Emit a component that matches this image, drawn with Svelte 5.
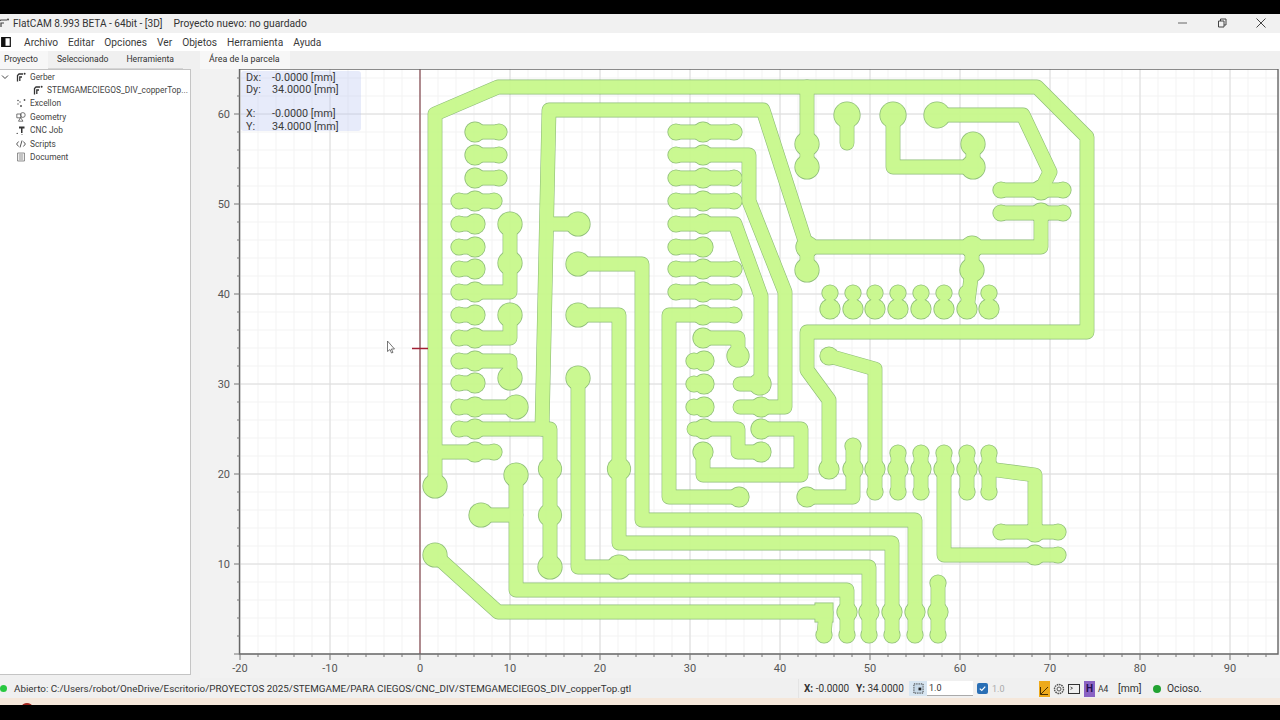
<script lang="ts">
	type Pt = [number, number];
	type Pad = [number, number, number];

	const menu = ['Archivo', 'Editar', 'Opciones', 'Ver', 'Objetos', 'Herramienta', 'Ayuda'];

	const leftRows = [132, 155, 178, 201, 224, 247, 269, 292, 315, 338, 361, 383, 407, 429, 452];
	const midRows = [132, 155, 178, 201, 224, 247, 269, 292, 315];
	const lowRows = [361, 384, 407];
	const topCols = [830, 853, 875, 898, 921, 944, 967, 989];
	const midCols = [853, 875, 898, 921, 944, 967, 989];
	const botCols = [847, 869, 892, 915, 938];

	const traces: Pt[][] = [
		[[435, 486], [435, 114], [498, 87], [1037, 87], [1087, 137], [1087, 332], [807, 332], [807, 370], [829, 400], [829, 469]],
		[[807, 87], [807, 167]],
		[[435, 452], [494, 452]],
		[[475, 132], [499, 132]],
		[[475, 155], [499, 155]],
		[[475, 178], [499, 178]],
		[[459, 201], [494, 201]],
		[[459, 224], [475, 224]],
		[[459, 247], [475, 247]],
		[[459, 269], [475, 269]],
		[[459, 292], [510, 292], [510, 224]],
		[[459, 315], [475, 315]],
		[[459, 338], [510, 338], [510, 315]],
		[[459, 361], [510, 361], [510, 378]],
		[[459, 383], [475, 383]],
		[[459, 407], [516, 407]],
		[[459, 429], [550, 429], [550, 567]],
		[[578, 224], [550, 224]],
		[[807, 247], [763, 110], [549, 110], [542, 429]],
		[[1041, 213], [1041, 247], [807, 247], [807, 270]],
		[[972, 247], [972, 270], [967, 309]],
		[[893, 115], [893, 167], [973, 167], [973, 144]],
		[[937, 115], [1023, 115], [1050, 172], [1041, 190]],
		[[1001, 190], [1063, 190]],
		[[1001, 213], [1063, 213]],
		[[847, 115], [847, 143]],
		[[516, 475], [516, 590], [847, 590], [847, 635]],
		[[481, 515], [516, 515]],
		[[435, 555], [498, 612], [826, 612], [824, 635]],
		[[578, 378], [578, 567], [869, 567], [869, 635]],
		[[578, 315], [619, 315], [619, 543], [892, 543], [892, 635]],
		[[578, 264], [642, 264], [642, 520], [915, 520], [915, 635]],
		[[938, 583], [938, 635]],
		[[676, 132], [734, 132]],
		[[676, 155], [749, 155], [749, 201], [785, 292], [785, 407], [740, 407]],
		[[676, 178], [734, 178]],
		[[676, 201], [734, 201]],
		[[676, 224], [735, 224], [761, 296], [761, 384], [740, 384]],
		[[676, 247], [703, 247]],
		[[676, 269], [734, 269]],
		[[676, 292], [734, 292]],
		[[734, 315], [669, 315], [669, 497], [739, 497]],
		[[703, 338], [738, 338], [738, 356]],
		[[694, 429], [738, 429], [738, 452], [761, 452]],
		[[761, 429], [801, 429], [801, 475], [703, 475], [703, 452]],
		[[807, 497], [853, 497], [853, 446]],
		[[829, 356], [875, 369], [875, 492]],
		[[898, 453], [898, 492]],
		[[921, 453], [921, 492]],
		[[967, 453], [967, 492]],
		[[989, 453], [989, 492]],
		[[944, 453], [944, 555], [1058, 555]],
		[[989, 469], [1035, 475], [1035, 532]],
		[[1001, 532], [1058, 532]]
	];

	const atX = (x: number, ys: number[], r: number): Pad[] => ys.map((y) => [x, y, r]);
	const atY = (y: number, xs: number[], r: number): Pad[] => xs.map((x) => [x, y, r]);

	const pads: Pad[] = [
		...atX(475, leftRows, 10),
		...atX(499, leftRows.slice(0, 3), 8),
		...atX(459, leftRows.slice(3, 14), 8),
		...atX(703, midRows, 10),
		...atX(676, midRows.slice(0, 8), 8),
		...atX(734, [132, 178, 201, 269, 292, 315], 8),
		...atX(694, lowRows, 8),
		...atX(704, lowRows, 10),
		...atY(293, topCols, 8),
		...atY(309, topCols, 10),
		...atY(469, midCols, 10),
		...atY(453, [898, 921, 944, 967, 989], 8),
		...atY(492, [875, 898, 921, 967, 989], 8),
		...atY(612, botCols, 10),
		...atY(635, [824, 847, 869, 892, 915, 938], 8),
		[494, 201, 8], [494, 452, 8],
		[1001, 190, 8], [1063, 190, 8], [1001, 213, 8], [1063, 213, 8],
		[1001, 532, 8], [1058, 532, 8], [1058, 555, 8], [938, 583, 8],
		[510, 224, 12], [510, 263, 12], [510, 315, 12], [510, 378, 12], [516, 407, 12],
		[435, 486, 12], [435, 555, 12], [578, 224, 12], [578, 264, 12], [578, 315, 12],
		[578, 378, 12], [516, 475, 12], [481, 515, 12], [550, 469, 11.5], [550, 515, 11.5],
		[550, 567, 12], [619, 469, 11.5], [619, 567, 12],
		[807, 144, 12], [807, 167, 12], [847, 115, 13], [893, 115, 13], [937, 115, 13],
		[973, 144, 12], [973, 167, 12], [1041, 190, 10], [1041, 213, 10], [807, 247, 11],
		[807, 270, 12], [972, 247, 11], [972, 270, 12],
		[703, 338, 10], [738, 356, 11], [760, 384, 11], [761, 407, 10], [704, 429, 10],
		[761, 429, 10], [761, 452, 10], [703, 452, 10], [739, 497, 10], [807, 497, 10],
		[829, 356, 9], [829, 469, 10], [853, 446, 8], [1035, 532, 10], [1035, 555, 10]
	];

	const toPoints = (t: Pt[]) => t.map((p) => p.join(',')).join(' ');

	const xMajor = Array.from({ length: 12 }, (_, i) => 240 + i * 90);
	const yMajor = Array.from({ length: 7 }, (_, i) => 114 + i * 90).filter((y) => y < 654);
	const xMinor = Array.from({ length: 58 }, (_, i) => 240 + i * 18);
	const yMinor = Array.from({ length: 33 }, (_, i) => 654 - i * 18);
	const xLabels = [-20, -10, 0, 10, 20, 30, 40, 50, 60, 70, 80, 90];
	const yLabels = [60, 50, 40, 30, 20, 10];
</script>

<div class="app">
	<div class="bar-black"></div>

	<header class="titlebar">
		<svg class="title-icon" viewBox="0 0 10 10">
			<path d="M-2 9V3.5L1 2H7M1 9V5H4" fill="none" stroke="#444" stroke-width="1.2" />
			<circle cx="8" cy="1.6" r="1" fill="#444" />
		</svg>
		<span class="title-name">FlatCAM 8.993 BETA - 64bit - [3D]</span>
		<span class="title-doc">Proyecto nuevo: no guardado</span>
		<div class="win-btns">
			<svg viewBox="0 0 12 12"><path d="M1 6H10" stroke="#666" stroke-width="1" /></svg>
			<svg viewBox="0 0 12 12"><path d="M2.5 4H8V10H2.5ZM4.5 4V2H10V8H8" fill="none" stroke="#444" stroke-width="1" /></svg>
			<svg viewBox="0 0 12 12"><path d="M1.5 1.5L10.5 10.5M10.5 1.5L1.5 10.5" stroke="#444" stroke-width="1" /></svg>
		</div>
	</header>

	<nav class="menubar">
		<svg class="menu-icon" viewBox="0 0 10 10">
			<path d="M.7.7H9.3V9.3H.7Z" fill="#fff" stroke="#111" stroke-width="1.2" />
			<path d="M.7.7H4.5V9.3H.7Z" fill="#111" />
		</svg>
		{#each menu as item}
			<span>{item}</span>
		{/each}
	</nav>

	<div class="tabrow">
		<div class="tabs-left">
			<span class="tab active">Proyecto</span>
			<span class="tab">Seleccionado</span>
			<span class="tab">Herramienta</span>
		</div>
		<div class="tabs-right">
			<span class="tab plot-tab">Área de la parcela</span>
		</div>
	</div>

	<main class="body">
		<aside class="tree">
			<div class="node">
				<svg class="chev" viewBox="0 0 8 8"><path d="M1 2.5L4 5.5L7 2.5" fill="none" stroke="#444" stroke-width="1" /></svg>
				<svg class="ico" viewBox="0 0 10 10"><path d="M1.5 9.5V3.5L3 2H7M3.8 9V5H6" fill="none" stroke="#333" stroke-width="1.3" /><circle cx="8.6" cy="1.8" r="1" fill="#333" /></svg>
				<span>Gerber</span>
			</div>
			<div class="node child">
				<svg class="ico" viewBox="0 0 10 10"><path d="M1.5 9.5V3.5L3 2H7M3.8 9V5H6" fill="none" stroke="#333" stroke-width="1.3" /><circle cx="8.6" cy="1.8" r="1" fill="#333" /></svg>
				<span>STEMGAMECIEGOS_DIV_copperTop...</span>
			</div>
			<div class="node">
				<svg class="ico" viewBox="0 0 10 10"><g fill="#555"><circle cx="2" cy="2.5" r=".8" /><circle cx="4" cy="4" r=".7" /><circle cx="8.5" cy="2" r=".9" /><circle cx="2" cy="6" r=".7" /><circle cx="5" cy="8" r="1" /></g></svg>
				<span>Excellon</span>
			</div>
			<div class="node">
				<svg class="ico" viewBox="0 0 10 10"><g fill="none" stroke="#555" stroke-width=".8"><path d="M.8 2H5V5.8H.8Z" /><circle cx="6.8" cy="3" r="2.4" /><path d="M2.5 9.2L4.5 5.5L7 9.2Z" /></g></svg>
				<span>Geometry</span>
			</div>
			<div class="node">
				<svg class="ico" viewBox="0 0 10 10"><path d="M3 1.5H8.5V3.5H6.5V8H5V3.5H3Z" fill="#333" /><circle cx="1.2" cy="8.4" r=".7" fill="#444" /><circle cx="6" cy="9.4" r=".5" fill="#444" /></svg>
				<span>CNC Job</span>
			</div>
			<div class="node">
				<svg class="ico" viewBox="0 0 10 10"><path d="M2.6 2.5L.6 5L2.6 7.5M7.4 2.5L9.4 5L7.4 7.5M6 1.5L4 8.5" fill="none" stroke="#444" stroke-width=".9" /></svg>
				<span>Scripts</span>
			</div>
			<div class="node">
				<svg class="ico" viewBox="0 0 10 10"><path d="M1.5 1H8.5V9H1.5Z" fill="#eee" stroke="#777" stroke-width=".8" /><path d="M3 3H7M3 5H7M3 7H7" stroke="#777" stroke-width=".7" /></svg>
				<span>Document</span>
			</div>
		</aside>

		<section class="plot">
			<svg class="canvas" viewBox="200 69 1080 609">
				<rect x="240" y="69" width="1038" height="585" fill="#fff" />
				{#each xMinor as x}
					<line x1={x} y1="69" x2={x} y2="654" class="minor" />
				{/each}
				{#each yMinor as y}
					<line x1="240" y1={y} x2="1278" y2={y} class="minor" />
				{/each}
				{#each xMajor as x}
					{#if x !== 420}
						<line x1={x} y1="69" x2={x} y2="654" class="major" />
					{/if}
				{/each}
				{#each yMajor as y}
					<line x1="240" y1={y} x2="1278" y2={y} class="major" />
				{/each}
				<line x1="420" y1="69" x2="420" y2="654" class="y-axis" />

				<g class="copper">
					<g class="edge">
						{#each traces as t}
							<polyline points={toPoints(t)} />
						{/each}
						{#each pads as p}
							<circle cx={p[0]} cy={p[1]} r={p[2] + 0.6} />
						{/each}
						<rect x="814.5" y="602.5" width="19" height="20" />
					</g>
					<g class="fill">
						{#each traces as t}
							<polyline points={toPoints(t)} />
						{/each}
						{#each pads as p}
							<circle cx={p[0]} cy={p[1]} r={p[2] - 0.2} />
						{/each}
						<rect x="815.3" y="603.3" width="17.4" height="18.4" />
					</g>
				</g>

				<path d="M239.5 69V654H1278V69H239.5Z" class="frame" />
				{#each xMinor as x, i}
					<line x1={x} y1="654" x2={x} y2={i % 5 === 0 ? 660 : 657} class="tick" />
				{/each}
				{#each yMinor as y, i}
					{#if y >= 69}
						<line x1={i % 5 === 0 ? 234 : 237} y1={y} x2="240" y2={y} class="tick" />
					{/if}
				{/each}
				{#each xLabels as n, i}
					<text x={240 + i * 90} y="672" text-anchor="middle" class="axis-label">{n}</text>
				{/each}
				{#each yLabels as n, i}
					<text x="230" y={118 + i * 90} text-anchor="end" class="axis-label">{n}</text>
				{/each}

				<path d="M412 348.5H428" stroke="#a32034" stroke-width="1.5" />
				<path d="M387.5 341V351.5L390 349.5L391.5 353L393 352.4L391.4 349H394.5Z" fill="#fff" stroke="#555" stroke-width=".8" />
			</svg>

			<div class="hud">
				<div class="hud-row"><span>Dx:</span><span>-0.0000 [mm]</span></div>
				<div class="hud-row"><span>Dy:</span><span>34.0000 [mm]</span></div>
				<div class="hud-gap"></div>
				<div class="hud-row"><span>X:</span><span>-0.0000 [mm]</span></div>
				<div class="hud-row"><span>Y:</span><span>34.0000 [mm]</span></div>
			</div>
		</section>
	</main>

	<footer class="status">
		<i class="dot small"></i>
		<span class="status-msg">Abierto: C:/Users/robot/OneDrive/Escritorio/PROYECTOS 2025/STEMGAME/PARA CIEGOS/CNC_DIV/STEMGAMECIEGOS_DIV_copperTop.gtl</span>
		<div class="status-right">
			<span class="coord"><b>X:</b> -0.0000</span>
			<span class="coord"><b>Y:</b> 34.0000</span>
			<span class="grid-btn">
				<svg viewBox="0 0 12 12"><rect x="1" y="1" width="10" height="10" fill="#c7d9e8" stroke="#333" stroke-dasharray="1.5 1" /><rect x="6" y="5" width="3" height="3" fill="#222" /></svg>
			</span>
			<span class="snap-input">1.0</span>
			<span class="check">
				<svg viewBox="0 0 12 12"><path d="M3 6.2L5.2 8.2L9 4" fill="none" stroke="#fff" stroke-width="1.3" /></svg>
			</span>
			<span class="snap-off">1.0</span>
			<span class="tool orange">
				<svg viewBox="0 0 11 16"><path d="M1.5 13.5L9 6M1.5 6V13.5H9" fill="none" stroke="#4a3000" stroke-width="1" /></svg>
			</span>
			<svg class="tool-icon" viewBox="0 0 12 12"><circle cx="6" cy="6" r="2" fill="none" stroke="#555" /><circle cx="6" cy="6" r="4.5" fill="none" stroke="#555" stroke-width="1.4" stroke-dasharray="1.6 .7" /></svg>
			<svg class="tool-icon" viewBox="0 0 12 12"><rect x=".5" y="1.5" width="11" height="9" fill="none" stroke="#333" /><path d="M2.5 4L4.5 5.2L2.5 6.4" fill="none" stroke="#333" stroke-width=".8" /></svg>
			<span class="tool purple">H</span>
			<span class="a4">A4</span>
			<span class="units">[mm]</span>
			<i class="dot"></i>
			<span class="idle">Ocioso.</span>
		</div>
	</footer>

	<div class="strip">
		<i class="blob"></i>
	</div>
	<div class="bar-black bottom"></div>
</div>

<style>
	:global(body) {
		background: #000;
	}

	.app {
		width: 1280px;
		height: 720px;
		display: flex;
		flex-direction: column;
		overflow: hidden;
		font-family: Roboto, 'Noto Sans', sans-serif;
		color: #333;
		background: #f0f0f0;
	}

	.bar-black {
		height: 14px;
		background: #000;
		flex: none;
	}

	.titlebar {
		height: 18px;
		padding-bottom: 1px;
		flex: none;
		display: flex;
		align-items: center;
		background: #f1f1f1;
		font-size: 10.1px;
		color: #333;
	}

	.title-icon {
		width: 10px;
		height: 10px;
		margin-right: 3px;
	}

	.title-doc {
		margin-left: 11px;
		font-size: 10.3px;
	}

	.win-btns {
		margin-left: auto;
		display: flex;
		gap: 27px;
		padding-right: 13px;
	}

	.win-btns svg {
		width: 12px;
		height: 12px;
	}

	.menubar {
		height: 18px;
		flex: none;
		display: flex;
		align-items: center;
		gap: 10px;
		background: #fff;
		font-size: 10.2px;
		color: #3a3a3a;
	}

	.menu-icon {
		width: 10px;
		height: 10px;
		margin: 0 3px 0 1px;
	}

	.tabrow {
		height: 18px;
		flex: none;
		display: flex;
		background: #f0f0f0;
		font-size: 8.6px;
	}

	.tabs-left {
		width: 191px;
		display: flex;
	}

	.tabs-right {
		padding-left: 200px;
		margin-left: -191px;
		display: flex;
	}

	.tab {
		display: flex;
		align-items: center;
		padding: 0 9px 2px;
		border-bottom: 1px solid #d5d5d5;
	}

	.tab.active {
		padding: 0 4px 2px;
		width: 48px;
		box-sizing: border-box;
		background: #f7f7f7;
		border-bottom: none;
	}

	.plot-tab {
		background: #f7f7f7;
		width: 90px;
		box-sizing: border-box;
		border-bottom: none;
		font-size: 8.9px;
	}

	.body {
		height: 607px;
		flex: none;
		display: flex;
		background: #f0f0f0;
	}

	.tree {
		width: 191px;
		height: 606px;
		box-sizing: border-box;
		border: 1px solid #c4c4c4;
		border-left: none;
		background: #fff;
		font-size: 8.35px;
		color: #444;
	}

	.node {
		height: 13.4px;
		display: flex;
		align-items: center;
		padding-left: 16px;
	}

	.node.child {
		padding-left: 33px;
	}

	.node:first-child {
		padding-left: 1px;
	}

	.chev {
		width: 8px;
		height: 8px;
		margin-right: 7px;
	}

	.ico {
		width: 10px;
		height: 10px;
		margin-right: 4px;
		flex: none;
	}

	.plot {
		position: relative;
		margin-left: 9px;
		width: 1080px;
		height: 609px;
	}

	.canvas {
		display: block;
		width: 1080px;
		height: 609px;
		background: #f2f2f2;
	}

	.minor {
		stroke: #f3f3f3;
		stroke-width: 1;
	}

	.major {
		stroke: #dcdcdc;
		stroke-width: 1;
	}

	.y-axis {
		stroke: #9c6f74;
		stroke-width: 1.6;
	}

	.copper {
		opacity: 0.96;
	}

	.edge polyline,
	.fill polyline {
		fill: none;
		stroke-linecap: round;
		stroke-linejoin: round;
	}

	.edge polyline {
		stroke: #8abb74;
		stroke-width: 14.8;
	}

	.edge circle,
	.edge rect {
		fill: #8abb74;
	}

	.fill polyline {
		stroke: #c8f88d;
		stroke-width: 13.6;
	}

	.fill circle,
	.fill rect {
		fill: #c8f88d;
	}

	.frame {
		fill: none;
		stroke: #666;
		stroke-width: 1.4;
	}

	.tick {
		stroke: #777;
		stroke-width: 1;
	}

	.axis-label {
		font-size: 11px;
		fill: #555;
	}

	.hud {
		position: absolute;
		left: 41px;
		top: 2px;
		width: 120px;
		height: 60px;
		box-sizing: border-box;
		padding: 1px 5px 0;
		border-radius: 3px;
		background: rgba(186, 198, 240, 0.35);
		font-size: 10.8px;
		line-height: 12.2px;
		color: #3c3c3c;
	}

	.hud-row {
		display: flex;
		gap: 6px;
	}

	.hud-row span:first-child {
		width: 20px;
	}

	.hud-gap {
		height: 12px;
	}

	.status {
		height: 22px;
		box-sizing: border-box;
		padding-top: 3px;
		flex: none;
		display: flex;
		align-items: center;
		background: #f0f0f0;
		font-size: 9.85px;
		color: #333;
	}

	.dot {
		width: 8px;
		height: 8px;
		margin-left: 1px;
		border-radius: 50%;
		background: #22a332;
		flex: none;
	}

	.dot.small {
		width: 7px;
		height: 7px;
		margin-left: 0;
		margin-right: 7px;
		background: #28c840;
	}

	.status-right {
		margin-left: auto;
		display: flex;
		align-items: center;
		height: 100%;
		width: 482px;
		box-sizing: border-box;
		padding-left: 5px;
		border-left: 1px solid #e4e4e4;
		font-size: 10.3px;
	}

	.coord {
		font-size: 10px;
		width: 52px;
		flex: none;
	}

	.coord b {
		font-weight: 700;
	}

	.grid-btn {
		margin-left: 1px;
		width: 18px;
		height: 15px;
		flex: none;
		background: #d8e6f2;
		display: flex;
		align-items: center;
		justify-content: center;
	}

	.grid-btn svg {
		width: 11px;
		height: 11px;
	}

	.snap-input {
		width: 46px;
		height: 15px;
		flex: none;
		box-sizing: border-box;
		padding-left: 2px;
		background: #fff;
		border-bottom: 1px solid #aaa;
		font-size: 9px;
		line-height: 14px;
	}

	.check {
		width: 11px;
		height: 11px;
		flex: none;
		margin-left: 4px;
		border-radius: 2px;
		background: #2a6fb5;
		display: flex;
	}

	.snap-off {
		margin-left: 4px;
		width: 47px;
		flex: none;
		font-size: 9px;
		color: #aaa;
	}

	.tool {
		width: 11px;
		height: 16px;
		display: flex;
		align-items: center;
		justify-content: center;
		flex: none;
	}

	.tool.orange {
		background: #eeaa1c;
	}

	.tool-icon {
		width: 12px;
		height: 12px;
		margin-left: 3px;
		flex: none;
	}

	.tool.purple {
		margin-left: 4px;
		background: #8a62c4;
		color: #241052;
		font-size: 10px;
		font-weight: 700;
	}

	.a4 {
		margin-left: 3px;
		font-size: 8.5px;
		width: 15px;
		flex: none;
	}

	.units {
		margin-left: 5px;
		width: 34px;
		flex: none;
	}

	.idle {
		margin-left: 6px;
	}

	.strip {
		height: 7px;
		flex: none;
		position: relative;
		overflow: hidden;
		background: #f5e7da;
	}

	.blob {
		position: absolute;
		left: 22px;
		top: 5px;
		width: 10px;
		height: 6px;
		border-radius: 50%;
		background: #a3261f;
	}

	.bottom {
		height: 15px;
	}
</style>
